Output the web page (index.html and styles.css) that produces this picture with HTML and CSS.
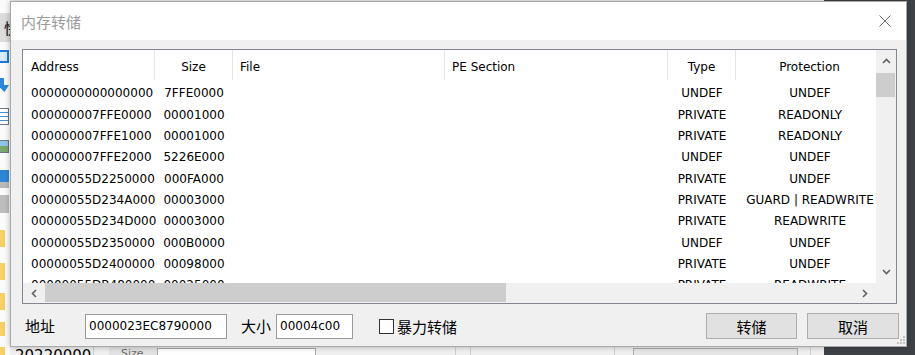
FILE: index.html
```html
<!DOCTYPE html>
<html lang="zh-CN">
<head>
    <meta charset="UTF-8">
    <title>内存转储</title>
    <link rel="stylesheet" href="styles.css">
</head>
<body>
<div class="desktop">
    <!-- app behind the dialog -->
    <div class="backdrop">
        <div class="side">
            <div class="side-btn"><span>快</span></div>
            <div class="ico ico-monitor"></div>
            <div class="ico ico-arrow"></div>
            <div class="ico ico-doc"></div>
            <div class="ico ico-pic"></div>
            <div class="ico ico-net"></div>
            <div class="ico ico-bin"></div>
            <div class="ico ico-folder f1"></div>
            <div class="ico ico-folder f2"></div>
            <div class="ico ico-folder f3"></div>
            <div class="ico ico-folder f4"></div>
            <div class="ico ico-folder f5"></div>
        </div>
        <div class="main">
            <div class="strip">
                <div class="s-date">20220000</div>
                <div class="s-col w16"></div>
                <div class="s-size">Size</div>
                <div class="s-field"></div>
                <div class="s-gap w139"></div>
                <div class="s-col w15"></div>
                <div class="s-col w144"></div>
                <div class="s-col w19"></div>
                <div class="s-btn"></div>
                <div class="s-gap w12"></div>
                <div class="s-col w14"></div>
            </div>
        </div>
        <div class="dark"></div>
    </div>

    <div class="dialog">
        <div class="titlebar">
            <span class="title">内存转储</span>
            <svg class="close" width="12" height="12" viewBox="0 0 12 12">
                <path d="M0.5 0.5 L11.5 11.5 M11.5 0.5 L0.5 11.5" stroke="#6b6b6b" stroke-width="1" fill="none"/>
            </svg>
        </div>

        <div class="dlg-body">
            <div class="listbox">
                <div class="viewport">
                    <div class="row head">
                        <div class="c-addr">Address</div>
                        <div class="c-size">Size</div>
                        <div class="c-file">File</div>
                        <div class="c-pe">PE Section</div>
                        <div class="c-type">Type</div>
                        <div class="c-prot">Protection</div>
                    </div>
                    <div class="row">
                        <div class="c-addr">0000000000000000</div><div class="c-size">7FFE0000</div>
                        <div class="c-file"></div><div class="c-pe"></div>
                        <div class="c-type">UNDEF</div><div class="c-prot">UNDEF</div>
                    </div>
                    <div class="row">
                        <div class="c-addr">000000007FFE0000</div><div class="c-size">00001000</div>
                        <div class="c-file"></div><div class="c-pe"></div>
                        <div class="c-type">PRIVATE</div><div class="c-prot">READONLY</div>
                    </div>
                    <div class="row">
                        <div class="c-addr">000000007FFE1000</div><div class="c-size">00001000</div>
                        <div class="c-file"></div><div class="c-pe"></div>
                        <div class="c-type">PRIVATE</div><div class="c-prot">READONLY</div>
                    </div>
                    <div class="row">
                        <div class="c-addr">000000007FFE2000</div><div class="c-size">5226E000</div>
                        <div class="c-file"></div><div class="c-pe"></div>
                        <div class="c-type">UNDEF</div><div class="c-prot">UNDEF</div>
                    </div>
                    <div class="row">
                        <div class="c-addr">00000055D2250000</div><div class="c-size">000FA000</div>
                        <div class="c-file"></div><div class="c-pe"></div>
                        <div class="c-type">PRIVATE</div><div class="c-prot">UNDEF</div>
                    </div>
                    <div class="row">
                        <div class="c-addr">00000055D234A000</div><div class="c-size">00003000</div>
                        <div class="c-file"></div><div class="c-pe"></div>
                        <div class="c-type">PRIVATE</div><div class="c-prot">GUARD | READWRITE</div>
                    </div>
                    <div class="row">
                        <div class="c-addr">00000055D234D000</div><div class="c-size">00003000</div>
                        <div class="c-file"></div><div class="c-pe"></div>
                        <div class="c-type">PRIVATE</div><div class="c-prot">READWRITE</div>
                    </div>
                    <div class="row">
                        <div class="c-addr">00000055D2350000</div><div class="c-size">000B0000</div>
                        <div class="c-file"></div><div class="c-pe"></div>
                        <div class="c-type">UNDEF</div><div class="c-prot">UNDEF</div>
                    </div>
                    <div class="row">
                        <div class="c-addr">00000055D2400000</div><div class="c-size">00098000</div>
                        <div class="c-file"></div><div class="c-pe"></div>
                        <div class="c-type">PRIVATE</div><div class="c-prot">UNDEF</div>
                    </div>
                    <div class="row">
                        <div class="c-addr">00000055DB480000</div><div class="c-size">00025000</div>
                        <div class="c-file"></div><div class="c-pe"></div>
                        <div class="c-type">PRIVATE</div><div class="c-prot">READWRITE</div>
                    </div>
                </div>

                <div class="vscroll">
                    <div class="sb-btn">
                        <svg width="9" height="6" viewBox="0 0 9 6"><polyline points="1,5 4.5,1.5 8,5" stroke="#606060" stroke-width="1.6" fill="none"/></svg>
                    </div>
                    <div class="sb-track"><div class="thumb-v"></div></div>
                    <div class="sb-btn">
                        <svg width="9" height="6" viewBox="0 0 9 6"><polyline points="1,1 4.5,4.5 8,1" stroke="#606060" stroke-width="1.6" fill="none"/></svg>
                    </div>
                </div>
                <div class="hscroll">
                    <div class="sb-btn">
                        <svg width="6" height="9" viewBox="0 0 6 9"><polyline points="5,1 1.5,4.5 5,8" stroke="#606060" stroke-width="1.6" fill="none"/></svg>
                    </div>
                    <div class="sb-track"><div class="thumb-h"></div></div>
                    <div class="sb-btn">
                        <svg width="6" height="9" viewBox="0 0 6 9"><polyline points="1,1 4.5,4.5 1,8" stroke="#606060" stroke-width="1.6" fill="none"/></svg>
                    </div>
                </div>
                <div class="corner"></div>
            </div>

            <div class="controls">
                <span class="lbl">地址</span>
                <div class="field f-addr">0000023EC8790000</div>
                <span class="lbl lbl-size">大小</span>
                <div class="field f-size">00004c00</div>
                <label class="check"><span class="box"></span>暴力转储</label>
                <button class="btn btn-ok">转储</button>
                <button class="btn btn-cancel">取消</button>
            </div>
        </div>

        <svg class="grip" width="8" height="8" viewBox="0 0 8 8">
            <rect x="6" y="0" width="2" height="2" fill="#c2c2c2"/>
            <rect x="3" y="3" width="2" height="2" fill="#c2c2c2"/>
            <rect x="6" y="3" width="2" height="2" fill="#c2c2c2"/>
            <rect x="0" y="6" width="2" height="2" fill="#c2c2c2"/>
            <rect x="3" y="6" width="2" height="2" fill="#c2c2c2"/>
            <rect x="6" y="6" width="2" height="2" fill="#c2c2c2"/>
        </svg>
    </div>
</div>
</body>
</html>
```

FILE: styles.css
```css
* {
    box-sizing: border-box;
}

body {
    margin: 0;
    font-family: "DejaVu Sans", "Noto Sans CJK SC", sans-serif;
    font-size: 12px;
    color: #000;
    background: #f0f0f0;
}

.desktop {
    position: relative;
    width: 915px;
    height: 355px;
    overflow: hidden;
}

/* ---- app behind the dialog ---- */
.backdrop {
    display: grid;
    grid-template-columns: 10px 814px 91px;
    height: 355px;
}

.side {
    background: #fbfbfb;
    display: flex;
    flex-direction: column;
    overflow: hidden;
}

.side-btn {
    margin-top: 13px;
    height: 29px;
    background: #dcdcdc;
    font-family: "Noto Sans CJK SC", sans-serif;
    font-size: 15px;
    line-height: 29px;
    padding-left: 4px;
    white-space: nowrap;
}

.ico {
    flex: none;
    width: 9px;
}

.ico-monitor {
    margin-top: 8px;
    height: 13px;
    border: 2px solid #1f7bd6;
    border-left: none;
    background: #d8eafa;
}

.ico-arrow {
    margin-top: 15px;
    height: 14px;
    background: #2b86db;
    clip-path: polygon(0 0, 45% 0, 45% 50%, 100% 50%, 50% 100%, 0 70%);
}

.ico-doc {
    margin-top: 16px;
    height: 17px;
    border: 1px solid #6b7785;
    border-left: none;
    background: repeating-linear-gradient(#fff 0 3px, #4e8fd0 3px 4px);
}

.ico-pic {
    margin-top: 15px;
    height: 13px;
    border: 1px solid #6b7785;
    border-left: none;
    background: linear-gradient(#8ec3ec 0 50%, #7aa86a 50%);
}

.ico-net {
    margin-top: 17px;
    height: 18px;
    background: linear-gradient(#2d87d8 0 65%, #b9b9b9 65%);
}

.ico-bin {
    margin-top: 7px;
    height: 18px;
    background: #bdbdbd;
}

.ico-folder {
    width: 5px;
    background: #f7cf62;
}

.f1 { margin-top: 17px; height: 17px; }
.f2 { margin-top: 16px; height: 17px; }
.f3 { margin-top: 13px; height: 17px; }
.f4 { margin-top: 12px; height: 14px; }
.f5 { margin-top: 11px; height: 17px; }

.main {
    background: #f0f0f0;
    display: flex;
    flex-direction: column;
    justify-content: flex-end;
}

.strip {
    height: 9px;
    display: flex;
    overflow: hidden;
}

.strip > div {
    flex: none;
    height: 30px;
}

.s-date {
    width: 83px;
    padding: 2px 0 0 5px;
    font-size: 15px;
    line-height: 16px;
}

.s-col {
    border-left: 1px solid #cfcfcf;
}

.w16 { width: 16px; }
.w15 { width: 15px; }
.w144 { width: 144px; }
.w19 { width: 19px; }
.w14 { width: 14px; }
.w139 { width: 139px; }
.w12 { width: 12px; }

.s-size {
    width: 48px;
    background: #e3e3e3;
    color: #6d6d6d;
    font-size: 11px;
    padding: 1px 0 0 12px;
}

.s-field {
    width: 159px;
    background: #fff;
    border: 1px solid #a9a9a9;
    margin-top: 2px;
}

.s-btn {
    width: 165px;
    margin-top: 2px;
    background: #e6e6e6;
    border: 1px solid #adadad;
}

.dark {
    background: #3e4246;
}

/* ---- dialog ---- */
.dialog {
    position: absolute;
    left: 10px;
    top: 1px;
    width: 897px;
    height: 346px;
    background: #f0f0f0;
    border: 1px solid #a9a9a9;
    box-shadow: 0 0 6px rgba(0, 0, 0, 0.28);
    display: flex;
    flex-direction: column;
}

.titlebar {
    height: 38px;
    flex: none;
    background: #fff;
    display: flex;
    align-items: center;
    justify-content: space-between;
    padding: 0 15px 0 10px;
}

.title {
    font-family: "Noto Sans CJK SC", sans-serif;
    font-size: 15px;
    color: #9b9b9b;
}

.dlg-body {
    flex: 1;
    padding: 9px 7px 0 11px;
    display: flex;
    flex-direction: column;
}

.listbox {
    width: 875px;
    height: 255px;
    border: 1px solid #828790;
    background: #fff;
    display: grid;
    grid-template-columns: 853px 20px;
    grid-template-rows: 233px 20px;
}

.viewport {
    overflow: hidden;
}

.row {
    display: grid;
    grid-template-columns: 132px 78px 212px 223px 68px 148px;
    height: 21.33px;
    line-height: 21.33px;
    padding-top: 1px;
    white-space: nowrap;
}

.row.head {
    height: 32.33px;
    padding-top: 0;
}

.row.head > div {
    border-right: 1px solid #e5e5e5;
    height: 30px;
    padding-top: 4px;
    line-height: 27px;
}

.c-addr { padding-left: 8px; }
.c-size { text-align: center; }
.c-file, .c-pe { padding-left: 7px; }
.c-type { text-align: center; }
.c-prot { text-align: center; overflow: visible; }

.vscroll {
    background: #f0f0f0;
    display: flex;
    flex-direction: column;
}

.hscroll {
    background: #f0f0f0;
    display: flex;
}

.corner {
    background: #f0f0f0;
}

.sb-btn {
    flex: none;
    width: 22px;
    height: 22px;
    display: flex;
    align-items: center;
    justify-content: center;
}

.vscroll .sb-btn {
    width: 20px;
}

.hscroll .sb-btn {
    height: 20px;
}

.sb-track {
    flex: 1;
    display: flex;
}

.vscroll .sb-track {
    flex-direction: column;
}

.thumb-v {
    margin: 1px 1px 0 0;
    height: 24px;
    background: #cdcdcd;
}

.thumb-h {
    width: 461px;
    height: 19px;
    background: #cdcdcd;
}

/* ---- bottom controls ---- */
.controls {
    margin-top: 9px;
    height: 26px;
    display: flex;
    align-items: center;
    padding-left: 3px;
    font-family: "Noto Sans CJK SC", sans-serif;
    font-size: 15px;
}

.lbl {
    line-height: 20px;
}

.field {
    height: 25px;
    background: #fff;
    border: 1px solid #9a9a9a;
    font-family: "DejaVu Sans", sans-serif;
    font-size: 12px;
    line-height: 23px;
    padding-left: 3px;
    white-space: nowrap;
}

.f-addr {
    width: 142px;
    margin-left: 30px;
}

.lbl-size {
    margin-left: 14px;
}

.f-size {
    width: 77px;
    margin-left: 5px;
}

.check {
    margin-left: 26px;
    display: flex;
    align-items: center;
}

.box {
    width: 15px;
    height: 15px;
    border: 1px solid #333;
    background: #fff;
    margin-right: 3px;
}

.btn {
    height: 26px;
    background: #e1e1e1;
    border: 1px solid #adadad;
    font-family: "Noto Sans CJK SC", sans-serif;
    font-size: 15px;
    color: #000;
    padding: 0;
}

.btn-ok {
    width: 91px;
    margin-left: auto;
}

.btn-cancel {
    width: 92px;
    margin-left: 10px;
}

.grip {
    position: absolute;
    right: 1px;
    bottom: 2px;
}
```
